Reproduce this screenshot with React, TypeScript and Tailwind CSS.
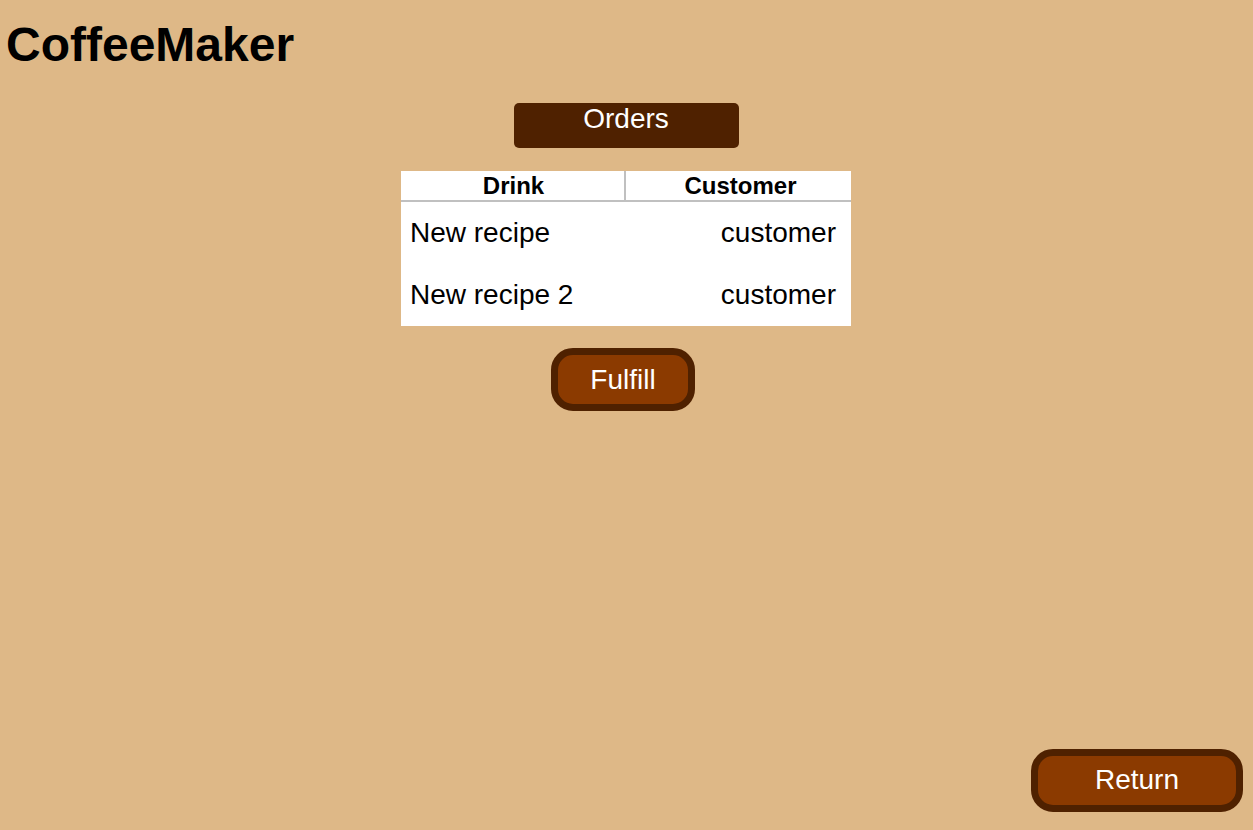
export default function App() {
  const orders = [
    { drink: "New recipe", customer: "customer" },
    { drink: "New recipe 2", customer: "customer" },
  ];

  return (
    <div className="flex h-[830px] flex-col bg-[#deb887] font-['Liberation_Sans',Arial,sans-serif] text-black">
      {/* HEADER */}
      <h1 className="pl-[6px] pt-[17px] text-[48px] font-bold leading-[1.15]">CoffeeMaker</h1>

      {/* ORDERS */}
      <div className="mr-[1px] mt-[31px] flex flex-col items-center">
        <div className="h-[45px] w-[225px] rounded-[5px] bg-[#4f2100] text-center text-[28px] leading-[1.15] text-white">
          Orders
        </div>

        <div className="mt-[23px] w-[450px] bg-white">
          <div className="grid grid-cols-2 border-b-2 border-[#c0c0c0] text-[24px] font-bold leading-[29px]">
            <div className="border-r-2 border-[#c0c0c0] pl-[2px] text-center">Drink</div>
            <div className="pl-[4px] text-center">Customer</div>
          </div>
          {orders.map((o) => (
            <div key={o.drink} className="grid h-[62px] grid-cols-2 items-center text-[28px] leading-[1.15]">
              <div className="pl-[9px]">{o.drink}</div>
              <div className="pr-[15px] text-right">{o.customer}</div>
            </div>
          ))}
        </div>

        <button className="ml-[-6px] mt-[22px] h-[63px] w-[144px] rounded-[22px] border-[7px] border-[#4f2100] bg-[#8b3a00] text-[28px] leading-[1.15] text-white">
          Fulfill
        </button>
      </div>

      {/* RETURN */}
      <div className="mt-auto flex justify-end pb-[18px] pr-[10px]">
        <button className="h-[63px] w-[212px] rounded-[22px] border-[7px] border-[#4f2100] bg-[#8b3a00] text-[28px] leading-[1.15] text-white">
          Return
        </button>
      </div>
    </div>
  );
}
